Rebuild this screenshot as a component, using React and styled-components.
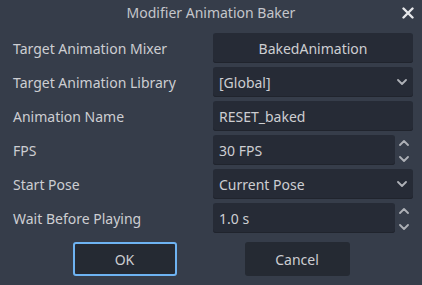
import React from "react";
import styled, { createGlobalStyle } from "styled-components";

const Global = createGlobalStyle`
  html, body { margin: 0; padding: 0; background: #363d4a; }
  body { font-family: "Noto Sans", "Open Sans", sans-serif; font-size: 14px; color: #cdced2; }
`;

const Dialog = styled.div`
  width: 422px;
  height: 285px;
  background: #363d4a;
  display: flex;
  flex-direction: column;
`;

const TitleBar = styled.div`
  height: 25px;
  display: grid;
  grid-template-columns: 1fr auto 1fr;
  align-items: center;
`;

const Title = styled.div`
  grid-column: 2;
  font-size: 14px;
  color: #c4c6cb;
`;

const Close = styled.div`
  grid-column: 3;
  justify-self: end;
  margin-right: 8px;
  width: 12px;
  height: 12px;
  display: flex;
`;

const Form = styled.div`
  margin-top: 8px;
  padding-left: 13px;
  display: grid;
  grid-template-columns: 200px 200px;
  grid-auto-rows: 30px;
  row-gap: 4px;
`;

const Label = styled.div`
  display: flex;
  align-items: center;
  white-space: nowrap;
`;

const Field = styled.div`
  background: #262b36;
  border-radius: 3px;
  box-shadow: inset 0 -1px 0 #20242d;
  display: flex;
  align-items: center;
  justify-content: ${(p) => (p.$center ? "center" : "space-between")};
  padding: 0 6px;
  white-space: nowrap;
`;

const SpinRow = styled.div`
  display: flex;
  align-items: stretch;
`;

const SpinField = styled(Field)`
  flex: 1;
`;

const Arrows = styled.div`
  width: 18px;
  display: flex;
  flex-direction: column;
  justify-content: space-between;
  align-items: center;
  padding: 5px 0 3px;
`;

const Buttons = styled.div`
  margin-top: 9px;
  display: flex;
  justify-content: center;
  gap: 68px;
`;

const Button = styled.div`
  width: ${(p) => p.$w}px;
  height: 34px;
  box-sizing: border-box;
  background: #252a33;
  border-radius: 3px;
  border: 2px solid ${(p) => (p.$focus ? "#6eb3f2" : "transparent")};
  display: flex;
  align-items: center;
  justify-content: center;
`;

const Chevron = ({ up }) => (
  <svg width="10" height="6" viewBox="0 0 10 6">
    <path
      d={up ? "M1 5 L5 1 L9 5" : "M1 1 L5 5 L9 1"}
      fill="none"
      stroke="#aeb1b7"
      strokeWidth="1.8"
      strokeLinecap="round"
      strokeLinejoin="round"
    />
  </svg>
);

const CloseIcon = () => (
  <svg width="12" height="12" viewBox="0 0 12 12">
    <path d="M1.5 1.5 L10.5 10.5 M10.5 1.5 L1.5 10.5" stroke="#e6e7ea" strokeWidth="2.4" strokeLinecap="round" />
  </svg>
);

const Spin = ({ value }) => (
  <SpinRow>
    <SpinField>{value}</SpinField>
    <Arrows>
      <Chevron up />
      <Chevron />
    </Arrows>
  </SpinRow>
);

export default function App() {
  return (
    <>
      <Global />
      <Dialog>
        <TitleBar>
          <Title>Modifier Animation Baker</Title>
          <Close>
            <CloseIcon />
          </Close>
        </TitleBar>
        <Form>
          <Label>Target Animation Mixer</Label>
          <Field $center>BakedAnimation</Field>
          <Label>Target Animation Library</Label>
          <Field>
            [Global]
            <Chevron />
          </Field>
          <Label>Animation Name</Label>
          <Field>RESET_baked</Field>
          <Label>FPS</Label>
          <Spin value="30 FPS" />
          <Label>Start Pose</Label>
          <Field>
            Current Pose
            <Chevron />
          </Field>
          <Label>Wait Before Playing</Label>
          <Spin value="1.0 s" />
        </Form>
        <Buttons>
          <Button $w={104} $focus>OK</Button>
          <Button $w={105}>Cancel</Button>
        </Buttons>
      </Dialog>
    </>
  );
}
